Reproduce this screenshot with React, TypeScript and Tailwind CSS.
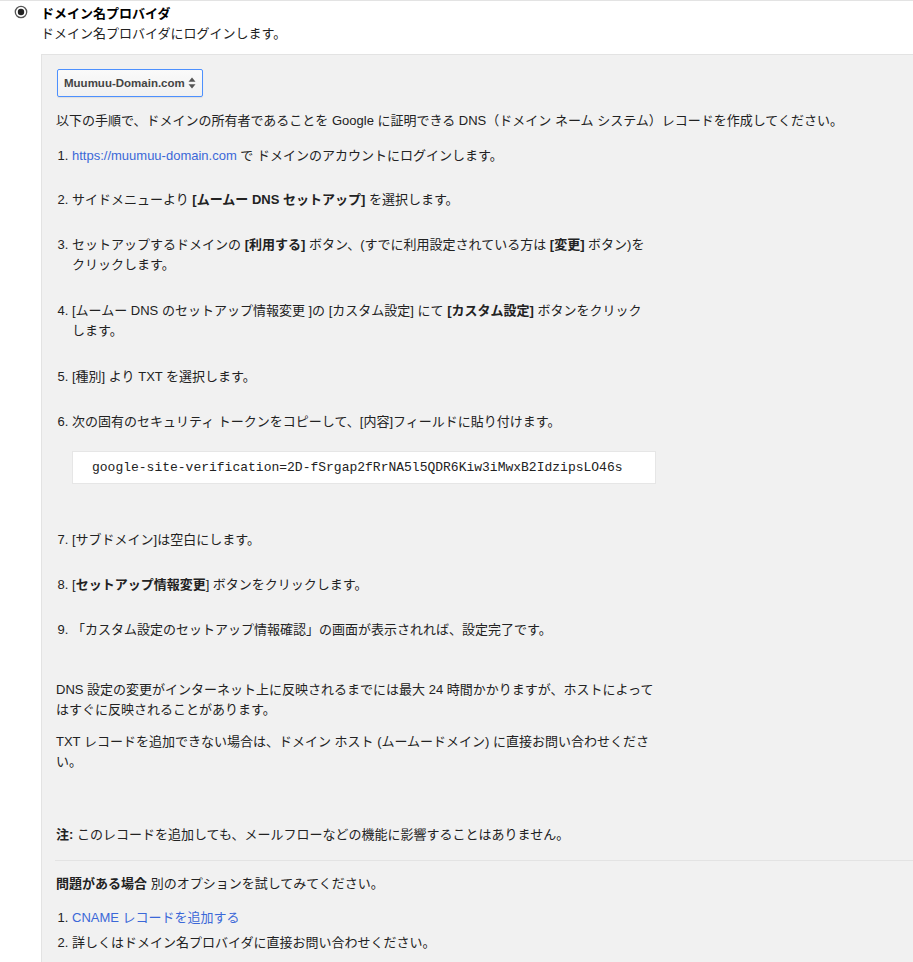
import React from "react";

const FONT = '"Liberation Sans", Arial, "Noto Sans CJK JP", sans-serif';

function Radio() {
  return (
    <svg width="14" height="14" viewBox="0 0 14 14" className="block">
      <circle cx="7" cy="7" r="5.7" fill="#fff" stroke="#555" strokeWidth="1.3" />
      <circle cx="7" cy="7" r="3.2" fill="#222" />
    </svg>
  );
}

function SelectArrows() {
  return (
    <svg width="8" height="12" viewBox="0 0 8 12" className="block">
      <path d="M4 0.5 L7.5 4.8 L0.5 4.8 Z" fill="#555" />
      <path d="M4 11.5 L7.5 7.2 L0.5 7.2 Z" fill="#555" />
    </svg>
  );
}

const Link = ({ children }: { children: React.ReactNode }) => (
  <a className="text-[#3b68d8] no-underline cursor-pointer">{children}</a>
);

export default function App() {
  return (
    <div
      className="w-[913px] h-[962px] overflow-hidden bg-white border-t border-[#e3e3e3] text-[13px] leading-[20px] text-[#222]"
      style={{ fontFamily: FONT }}
    >
      <div className="flex">
        <div className="w-[41px] shrink-0 pl-[14px] pt-[4px]">
          <Radio />
        </div>
        <div className="flex-1 min-w-0">
          <div className="pt-[3px] font-bold text-black">ドメイン名プロバイダ</div>
          <div>ドメイン名プロバイダにログインします。</div>
          <div className="mt-[10px] bg-[#f1f1f1] border-t border-l border-[#e3e3e3] pl-[14px] pt-[14px] h-[910px]">
            <div className="ml-[1px] w-[146px] h-[28px] border border-[#4d90fe] rounded-[2px] bg-gradient-to-b from-[#fafafa] to-[#f1f1f1] flex items-center justify-between pl-[6px] pr-[6px] shadow-[0_1px_1px_rgba(0,0,0,0.08)]">
              <span className="text-[11.5px] font-bold text-[#444]">Muumuu-Domain.com</span>
              <SelectArrows />
            </div>
            <p className="mt-[14px]">
              以下の手順で、ドメインの所有者であることを Google に証明できる DNS（ドメイン ネーム システム）レコードを作成してください。
            </p>
            <div className="w-[600px]">
              <ol className="mt-[15px] list-decimal pl-[16px] w-[594px]">
                <li>
                  <Link>https://muumuu-domain.com</Link> で ドメインのアカウントにログインします。
                </li>
                <li className="mt-[24px]">
                  サイドメニューより <b>[ムームー DNS セットアップ]</b> を選択します。
                </li>
                <li className="mt-[25px]">
                  セットアップするドメインの <b>[利用する]</b> ボタン、(すでに利用設定されている方は <b>[変更]</b> ボタン)をクリックします。
                </li>
                <li className="mt-[26px]">
                  [ムームー DNS のセットアップ情報変更 ]の [カスタム設定] にて <b>[カスタム設定]</b> ボタンをクリックします。
                </li>
                <li className="mt-[26px]">[種別] より TXT を選択します。</li>
                <li className="mt-[25px] pb-[21px]">
                  次の固有のセキュリティ トークンをコピーして、[内容]フィールドに貼り付けます。
                  <div
                    className="mt-[19px] w-[584px] h-[33px] bg-white border border-[#e6e6e6] flex items-center pl-[19px] text-[13px] text-[#222]"
                    style={{ fontFamily: '"Liberation Mono", "Courier New", monospace' }}
                  >
                    google-site-verification=2D-fSrgap2fRrNA5l5QDR6Kiw3iMwxB2IdzipsLO46s
                  </div>
                </li>
                <li className="mt-[25px]">[サブドメイン]は空白にします。</li>
                <li className="mt-[25px]">
                  [<b>セットアップ情報変更</b>] ボタンをクリックします。
                </li>
                <li className="mt-[25px]">
                  「カスタム設定のセットアップ情報確認」の画面が表示されれば、設定完了です。
                </li>
              </ol>
              <p className="mt-[40px]">
                DNS 設定の変更がインターネット上に反映されるまでには最大 24 時間かかりますが、ホストによってはすぐに反映されることがあります。
              </p>
              <p className="mt-[12px]">
                TXT レコードを追加できない場合は、ドメイン ホスト (ムームードメイン) に直接お問い合わせください。
              </p>
              <p className="mt-[53px]">
                <b>注:</b> このレコードを追加しても、メールフローなどの機能に影響することはありません。
              </p>
            </div>
            <div className="mt-[15px] -ml-[1px] border-t border-[#e3e3e3]" />
            <p className="mt-[13px]">
              <b>問題がある場合</b> 別のオプションを試してみてください。
            </p>
            <ol className="mt-[14px] list-decimal pl-[16px]">
              <li>
                <Link>CNAME レコードを追加する</Link>
              </li>
              <li className="mt-[5px]">詳しくはドメイン名プロバイダに直接お問い合わせください。</li>
            </ol>
          </div>
        </div>
      </div>
    </div>
  );
}
